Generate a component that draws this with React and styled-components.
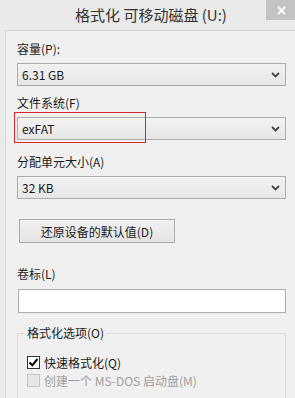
import { styled, createGlobalStyle } from 'styled-components';

const GlobalStyle = createGlobalStyle`
  html, body {
    margin: 0;
    padding: 0;
    background: #eaeaea;
  }
  body {
    font-family: "Noto Sans CJK SC", "Noto Sans", sans-serif;
  }
`;

const Chevron = () => (
  <svg width="9" height="6" viewBox="0 0 9 6">
    <path d="M1 1 L4.5 4.5 L8 1" fill="none" stroke="#444" strokeWidth="1.8" />
  </svg>
);

const Select = ({ value, highlighted }) => (
  <SelectBox>
    <span>{value}</span>
    <Chevron />
    {highlighted && <Highlight />}
  </SelectBox>
);

export default function App() {
  return (
    <Frame>
      <GlobalStyle />
      <TitleBar>
        <Title>格式化 可移动磁盘 (U:)</Title>
        <CloseButton>
          <svg width="9" height="9" viewBox="0 0 9 9">
            <path d="M1 1 L8 8 M8 1 L1 8" stroke="#fff" strokeWidth="1.8" />
          </svg>
        </CloseButton>
      </TitleBar>

      <Client>
        <Column>
          <Field $top={0}>
            <Label>容量(P):</Label>
            <Select value="6.31 GB" />
          </Field>
          <Field $top={9}>
            <Label>文件系统(F)</Label>
            <Select value="exFAT" highlighted />
          </Field>
          <Field $top={14}>
            <Label>分配单元大小(A)</Label>
            <Select value="32 KB" />
          </Field>

          <Button>还原设备的默认值(D)</Button>

          <Field $top={23} $gap={7}>
            <Label>卷标(L)</Label>
            <TextInput />
          </Field>

          <Group>
            <Legend>格式化选项(O)</Legend>
            <CheckRow>
              <Check $checked>
                <svg width="11" height="11" viewBox="0 0 11 11">
                  <path d="M1.5 5.5 L4.3 8.3 L9.5 2" fill="none" stroke="#000" strokeWidth="2" />
                </svg>
              </Check>
              快速格式化(Q)
            </CheckRow>
            <CheckRow $disabled>
              <Check $disabled />
              创建一个 MS-DOS 启动盘(M)
            </CheckRow>
          </Group>
        </Column>
      </Client>
    </Frame>
  );
}

const Frame = styled.div`
  width: 295px;
  height: 398px;
  overflow: hidden;
  display: flex;
  flex-direction: column;
  background: #eaeaea;
`;

const TitleBar = styled.div`
  display: flex;
  align-items: flex-start;
  height: 30px;
  flex-shrink: 0;
`;

const Title = styled.div`
  flex: 1;
  padding-left: 36px;
  text-align: center;
  font-size: 15px;
  line-height: 30px;
  color: #333333;
  white-space: nowrap;
`;

const CloseButton = styled.div`
  width: 27px;
  height: 20px;
  display: flex;
  align-items: center;
  justify-content: center;
  padding-left: 2px;
  background: #c3c3c3;
`;

const Client = styled.div`
  flex: 1;
  margin-left: 5px;
  border-top: 1px solid #d6d6d6;
  border-left: 1px solid #d6d6d6;
  background: #f0f0f0;
  padding: 10px 0 0 11px;
`;

const Column = styled.div`
  width: 269px;
  display: flex;
  flex-direction: column;
`;

const Field = styled.div`
  display: flex;
  flex-direction: column;
  gap: ${(p) => p.$gap ?? 6}px;
  margin-top: ${(p) => p.$top}px;
`;

const Label = styled.label`
  font-size: 12px;
  line-height: 16px;
  color: #1a1a1a;
`;

const SelectBox = styled.div`
  position: relative;
  height: 23px;
  box-sizing: border-box;
  display: flex;
  align-items: center;
  justify-content: space-between;
  padding: 0 5px 0 4px;
  border: 1px solid #acacac;
  background: linear-gradient(#f2f2f2, #e6e6e6);
  font-size: 12px;
  color: #1a1a1a;
`;

const Highlight = styled.div`
  position: absolute;
  left: -4px;
  top: -6px;
  width: 132px;
  height: 31px;
  border: 1.5px solid #d8262c;
  box-sizing: border-box;
  pointer-events: none;
`;

const Button = styled.div`
  margin: 20px 0 0 2px;
  width: 156px;
  height: 24px;
  box-sizing: border-box;
  display: flex;
  align-items: center;
  justify-content: center;
  border: 1px solid #acacac;
  background: linear-gradient(#f0f0f0, #e5e5e5);
  font-size: 12px;
  color: #1a1a1a;
`;

const TextInput = styled.div`
  height: 24px;
  box-sizing: border-box;
  margin-left: 1px;
  border: 1px solid #abadb3;
  background: #ffffff;
`;

const Group = styled.fieldset`
  margin: 12px 0 0;
  padding: 0 0 20px 9px;
  border: 1px solid #dcdcdc;
  display: flex;
  flex-direction: column;
`;

const Legend = styled.legend`
  padding: 0 2px;
  margin-left: -2px;
  font-size: 12px;
  line-height: 16px;
  color: #1a1a1a;
  margin-bottom: 12px;
`;

const CheckRow = styled.div`
  display: flex;
  align-items: center;
  gap: 4px;
  height: 18px;
  font-size: 12px;
  color: ${(p) => (p.$disabled ? '#a0a0a0' : '#1a1a1a')};
`;

const Check = styled.span`
  width: 13px;
  height: 13px;
  box-sizing: border-box;
  display: flex;
  align-items: center;
  justify-content: center;
  border: 1px solid ${(p) => (p.$disabled ? '#c2c2c2' : '#333333')};
  background: ${(p) => (p.$disabled ? '#e6e6e6' : '#ffffff')};
`;
